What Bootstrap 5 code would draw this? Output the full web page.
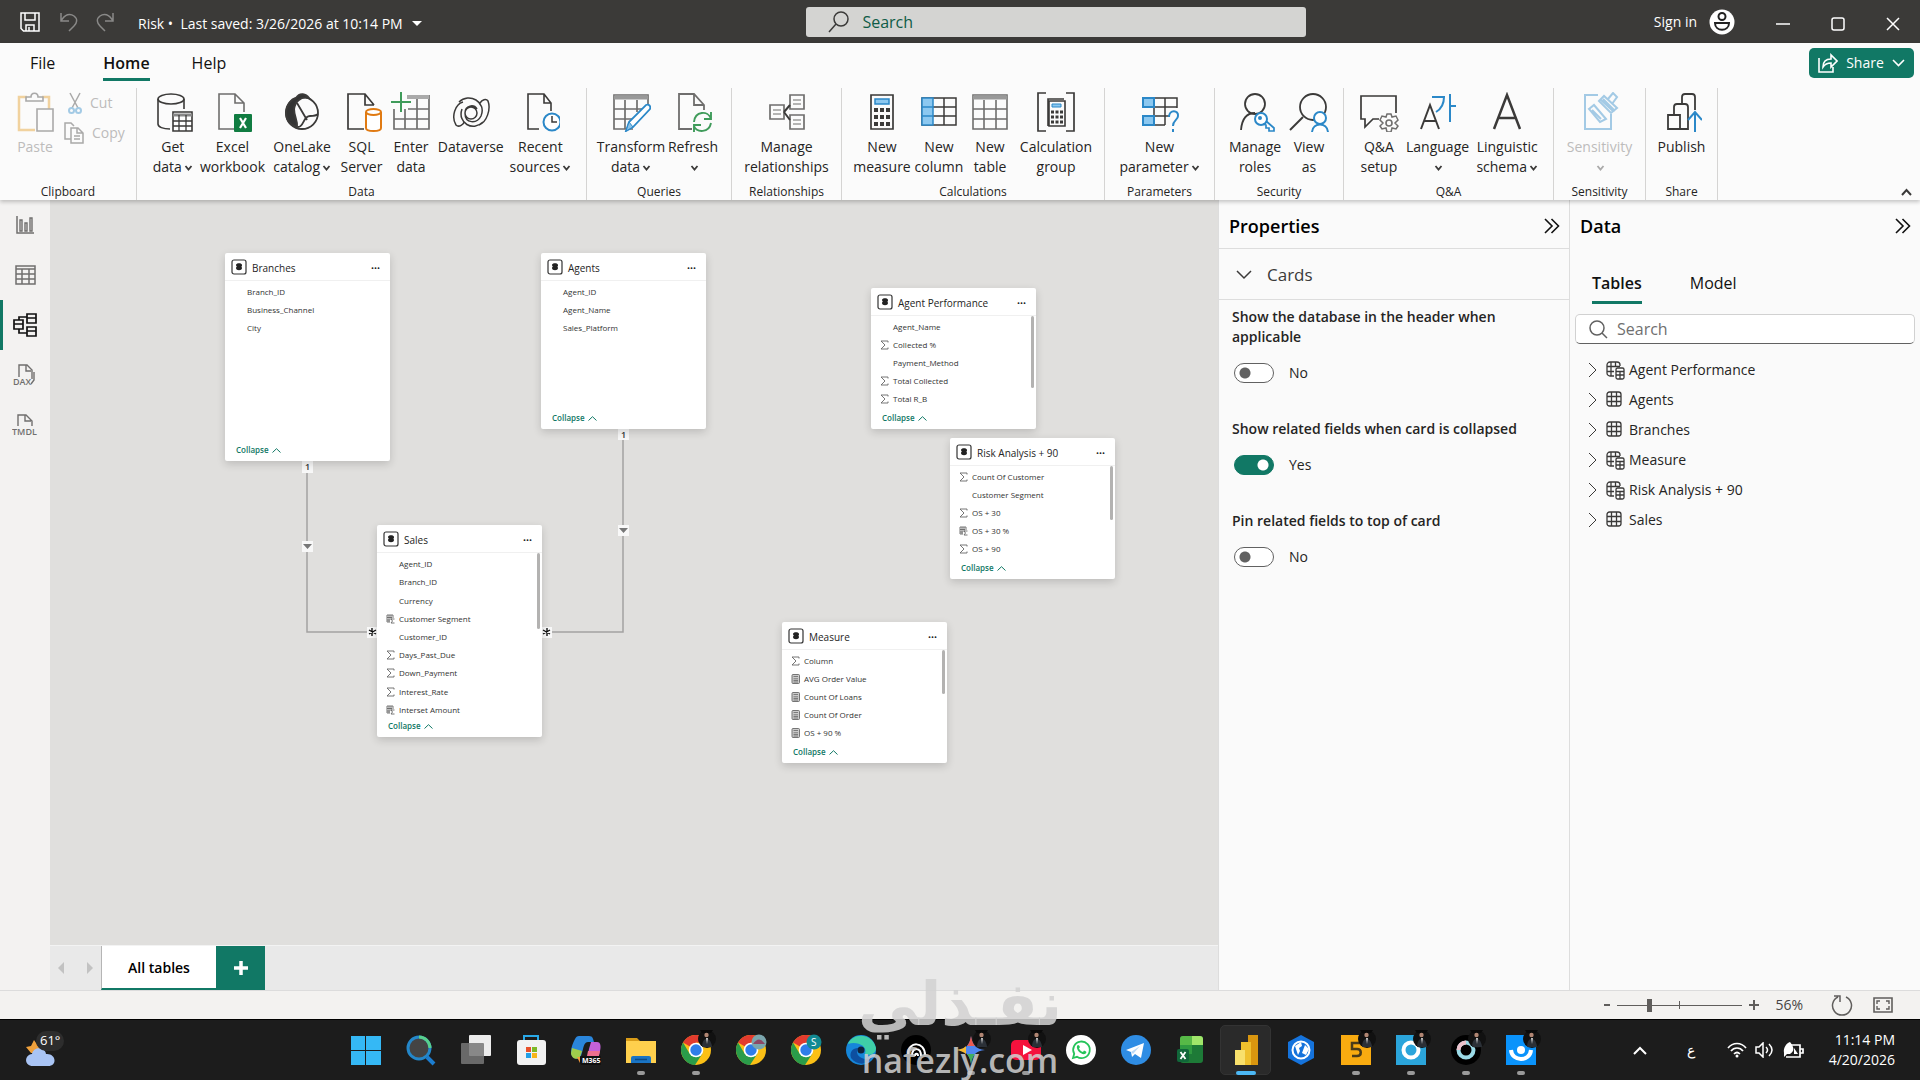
<!DOCTYPE html>
<html lang="en">
<head>
<meta charset="utf-8">
<meta name="viewport" content="width=device-width, initial-scale=1">
<title>Risk - Model view</title>
<link href="https://cdn.jsdelivr.net/npm/bootstrap@5.3.0/dist/css/bootstrap.min.css" rel="stylesheet">
<style>
  :root { --accent:#117865; --ink:#252423; --line:#dddddd; }
  body { font-family:"Open Sans","Noto Sans",sans-serif; font-size:14px; line-height:20px; color:var(--ink); background:#1c1c1c; overflow:hidden; }
  button { border:0; background:none; padding:0; color:inherit; font:inherit; }
  svg { display:block; fill:none; stroke:#3b3a39; stroke-width:2; flex:none; }
  svg text { stroke:none; font-family:"Open Sans",sans-serif; }
  a { color:inherit; text-decoration:none; }

  .titlebar { height:43px; background:#3b3a38; color:#fff; }
  .titlebar svg { stroke:#fff; stroke-width:1.5; }
  .title-left { flex:0 0 42%; padding-left:20px; }
  .title-search { flex:0 0 26%; height:30px; background:#d4d4d2; border-radius:3px; padding-left:22px; gap:13px; }
  .title-search svg { stroke:#3b3a39; }
  .title-search input, .data-search input { border:0; outline:0; background:none; font-size:16px; flex:1; min-width:0; padding:0; }
  .title-search input::placeholder { color:#0f5c47; opacity:1; }
  .win-btn { width:55px; height:43px; }
  .history { gap:18px; margin:0 24px 0 20px; }
  .dim { opacity:.4; }

  .ribbon { background:#fbfbfb; height:157px; position:relative; z-index:3; box-shadow:0 2px 4px rgba(0,0,0,.22); }
  .tabrow { height:45px; padding:5px 6px 0 30px; font-size:16px; color:#111; }
  .rtab { line-height:30px; height:33px; }
  .rtab.active { font-weight:600; border-bottom:3px solid var(--accent); margin:0 42px 0 48px; }
  .share-btn { width:105px; height:30px; background:var(--accent); color:#fff; border-radius:5px; font-size:14px; }
  .share-btn svg { stroke:#fff; }
  .rgroup { height:112px; border-right:1px solid #d5d4d3; padding:4px 8px 0; }
  .rgroup-name { font-size:12px; line-height:16px; text-align:center; margin-top:auto; }
  .rbtn { display:flex; flex-direction:column; align-items:center; white-space:nowrap; height:88px; }
  .rbtn > span { margin-top:5px; }
  .rbtn svg.chev { display:inline-block; width:9px; height:6px; margin-left:2px; vertical-align:1px; }
  .w44{width:44px}.w48{width:48px}.w54{width:54px}.w56{width:56px}.w60{width:60px}.w64{width:64px}.w68{width:68px}.w76{width:76px}
  .rb { stroke:#2b88c8; } .g { stroke:#6f6e6d; } .gr { stroke:#3f9b5a; } .or{stroke:#e07a12;}
  .small-cmds { margin-left:2px; gap:8px; }
  .small-cmd { gap:8px; color:#bdbcbb; height:22px; }
  .off { color:#bdbcbb; } .faded { opacity:.42; }

  .rail { width:50px; background:#f3f2f1; flex:none; }
  .rail button { height:50px; width:50px; display:flex; align-items:center; justify-content:center; border-left:3px solid transparent; padding-right:3px; }
  .rail button.active { border-left-color:var(--accent); }
  .rail svg { stroke:#706f6e; }
  .rail .active svg { stroke:#111; }

  .canvas { background:#e0dfdd; position:relative; overflow:hidden; }
  .links { position:absolute; left:0; top:0; width:100%; height:100%; }
  .entity { position:absolute; width:165px; background:#fff; border-radius:2px; box-shadow:0 3px 8px rgba(0,0,0,.16); display:flex; flex-direction:column; font-size:8px; line-height:12px; }
  .entity-head { height:28px; padding:0 10px 0 6px; gap:5px; font-size:10px; border-bottom:1px solid #f0f0f0; flex:none; }
  .entity-head span { padding-top:2px; }
  .entity-head button { font-size:8px; padding-top:2px; }
  .entity ul { list-style:none; margin:0; padding:2px 0 0 9px; flex:1; display:flex; flex-direction:column; }
  .entity li { flex:1; max-height:18px; display:flex; align-items:center; gap:4px; color:#333; }
  #sales li { max-height:none; }
  .entity li > i { width:9px; flex:none; }
  .entity li svg { width:9px; height:10px; stroke:#666; }
  .entity-foot { height:18px; padding:1px 0 0 11px; color:var(--accent); flex:none; display:flex; gap:3px; font-weight:600; }
  .entity-foot svg { width:9px; height:5px; stroke:var(--accent); margin-top:4px; }
  .entity .thumb { position:absolute; right:2px; top:28px; width:3px; background:#b3b2b1; border-radius:2px; }
  #branches{left:175px;top:53px;height:208px}
  #agents{left:491px;top:53px;height:176px}
  #sales{left:327px;top:325px;height:212px}
  #agent-performance{left:821px;top:88px;height:141px}
  #risk-analysis{left:900px;top:238px;height:141px}
  #measure{left:732px;top:422px;height:141px}
  .th76{height:76px}.th72{height:72px}.th54{height:54px}.th44{height:44px}

  .sheetbar { height:45px; background:#e9e9e9; border-top:1px solid #f3f3f3; }
  .sheet-nav { width:51px; padding:0 8px; }
  .sheet-tab { width:115px; background:#fff; border-left:1px solid #b5b5b5; border-bottom:2px solid var(--accent); font-weight:600; color:#000; padding-top:2px; }
  .sheet-add { width:49px; background:var(--accent); }

  .pane { flex:0 0 351px; background:#fafafa; border-left:1px solid var(--line); }
  .pane-head { height:48px; padding:4px 9px 0 10px; font-size:18px; font-weight:600; color:#000; }
  .prop-section { height:52px; border-top:1px solid var(--line); border-bottom:1px solid var(--line); padding:2px 0 0 17px; gap:15px; font-size:17px; color:#3b3a39; width:100%; }
  .prop-list { padding-top:7px; }
  .prop-title { font-weight:600; padding-bottom:16px; padding-right:40px; display:block; }
  .prop { padding:0 12px 36px 13px; }
  .prop .form-check { margin:0 0 0 2px; padding:0; min-height:20px; gap:15px; }
  .prop .form-check-input { float:none; margin:0; width:40px; height:20px; border:1px solid #616161; background:#fff radial-gradient(circle at 10px 9px,#616161 5px,transparent 6px) no-repeat; border-radius:10px; }
  .prop .form-check-input:checked { background:var(--accent) radial-gradient(circle at 28px 9px,#fff 5px,transparent 6px) no-repeat; border-color:var(--accent); }
  .data-tabs { padding:20px 0 0 22px; gap:48px; font-size:16px; color:#111; }
  .data-tabs button { line-height:30px; height:36px; padding-bottom:3px; border-bottom:3px solid transparent; }
  .data-tabs .active { font-weight:600; border-bottom-color:var(--accent); }
  .data-search { height:30px; margin:10px 5px 11px 5px; border:1px solid #d1d1d1; border-bottom-color:#616161; border-radius:5px; background:#fff; padding-left:13px; gap:9px; }
  .data-search input::placeholder { color:#707070; opacity:1; }
  .tree button { display:flex; align-items:center; height:30px; width:100%; padding-left:18px; }
  .tree .tw { width:9px; height:16px; margin-right:8px; stroke-width:1; }
  .tree .ti { width:20px; height:20px; margin-right:4px; stroke-width:1.3; }

  .statusbar { height:29px; background:#f3f2f0; border-top:1px solid #dcdcdc; padding-right:27px; color:#484644; }
  .statusbar svg { stroke:#605e5c; }
  .zoomer { -webkit-appearance:none; appearance:none; width:125px; height:15px; margin:0 7px; background:linear-gradient(#605e5c,#605e5c) center/100% 1px no-repeat,linear-gradient(#605e5c,#605e5c) center/1px 8px no-repeat; }
  .zoomer::-webkit-slider-thumb { -webkit-appearance:none; width:5px; height:13px; background:#605e5c; border:0; border-radius:0; }

  .taskbar { height:61px; background:#1c1c1c; border-top:1px solid #000; color:#fff; }
  .weather { flex:0 0 338px; padding-left:24px; }
  .app { width:55px; height:60px; display:flex; align-items:center; justify-content:center; position:relative; }
  .app svg { width:30px; height:30px; stroke:none; overflow:visible; }
  .app.open::after { content:""; position:absolute; bottom:5px; width:8px; height:4px; border-radius:2px; background:#9a9a9a; }
  .app.current::before { content:""; position:absolute; inset:5px 2px; background:#2a2a2a; border:1px solid #333; border-radius:5px; }
  .app.current::after { width:20px; background:#4cb8f5; }
  .app.current svg { position:relative; }
  .tray { padding-right:25px; }
  .tray svg { stroke:#fff; }

  .watermark { position:absolute; right:0; left:0; bottom:0; z-index:10; text-align:center; color:rgba(210,210,210,.86); pointer-events:none; }
  .watermark .wm-ar { font:700 60px/72px "DejaVu Sans",sans-serif; white-space:nowrap; }
  .watermark .wm-en { font:600 34px/40px "Open Sans",sans-serif; }
</style>
<script src="https://cdn.jsdelivr.net/npm/bootstrap@5.3.0/dist/js/bootstrap.bundle.min.js"></script>
</head>
<body>
<svg width="0" height="0" class="position-absolute">
  <defs>
    <symbol id="i-db" viewBox="0 0 16 16"><rect x="1" y="1" width="14" height="14" rx="2" fill="#fff" stroke="#333" stroke-width="1.200"/><path d="M5 6c0-2.500 6-2.500 6 0s-.8 1-.8 1.500.8.5.8 1.500c0 3-6 3-6 0 0-1 .8-1 .8-1.500S5 7 5 6z" fill="#222" stroke="none"/></symbol>
    <symbol id="i-up" viewBox="0 0 9 5"><path d="M.5 4.500 4.500.7l4 3.800" fill="none" stroke-width="1"/></symbol>
    <symbol id="i-chev" viewBox="0 0 9 6"><path d="M1.500 1l3 3.500 3-3.500" stroke-width="1.800"/></symbol>
    <symbol id="i-sum" viewBox="0 0 9 10"><path d="M8 2.500V1H1l4 4-4 4h7V7.500" stroke-width=".9"/></symbol>
    <symbol id="i-calc" viewBox="0 0 9 10"><rect x="1" y=".5" width="7.500" height="9" rx="1" fill="#ccc" stroke-width=".9"/><path d="M2.500 2.500h4.500M2.500 4.800h4.500M2.500 6.500h4.500M2.500 8h4.500" stroke-width=".8"/></symbol>
    <symbol id="i-col" viewBox="0 0 9 10"><path d="M1 1h6v3M1 1v7h3M3 1v7M5 1v5M1 3.500h5M1 6h3" stroke-width=".9"/><path d="M8.500 5H5l1.500 2L5 9h3.500" stroke-width=".9"/></symbol>
    <symbol id="i-table" viewBox="0 0 20 20"><rect x="2" y="2" width="14" height="14" rx="2.500"/><path d="M6.500 2v14M11.500 2v14M2 6.500h14M2 11.500h14"/></symbol>
    <symbol id="i-tcalc" viewBox="0 0 20 20"><path d="M9 16H5a3 3 0 0 1-3-3V5a3 3 0 0 1 3-3h7a3 3 0 0 1 3 3v1M6 2v14M10.500 2v4M2 6.500h13M2 11.500h7"/><rect x="11" y="8" width="8" height="11" rx="1.500" fill="#fff"/><path d="M11 11.500h8M11 15h8M15 11v8" stroke-width="1.300"/></symbol>
    <symbol id="i-right" viewBox="0 0 9 16"><path d="M1 1l7 7-7 7"/></symbol>
    <symbol id="i-dbl" viewBox="0 0 16 16"><path d="M1 1l7 7-7 7M7.500 1l7 7-7 7" stroke="#111" stroke-width="1.600"/></symbol>
    <symbol id="i-chrome" viewBox="0 0 30 30"><circle cx="15" cy="15" r="15" fill="#fbc016"/><path d="M15 15 2 7.500A15 15 0 0 1 28 7.500H15z" fill="#e33b2e"/><path d="M2 7.500A15 15 0 0 0 14 30l7.500-11.500-13-0z" fill="#2a9c4a"/><circle cx="15" cy="15" r="7.300" fill="#fff"/><circle cx="15" cy="15" r="5.700" fill="#2f7de9"/></symbol>
    <symbol id="i-face" viewBox="0 0 18 20"><circle cx="9" cy="10" r="9" fill="#111"/><path d="M2 1h13l-2 3H4z" fill="#0a0a0a"/><circle cx="8.500" cy="6" r="2.200" fill="#b08572"/><path d="M4 18c0-11 9-11 10 0z" fill="#2b3037"/><path d="M8 9l1 6 1-6z" fill="#ccc"/></symbol>
  </defs>
</svg>

<div class="vh-100 d-flex flex-column position-relative">
  <header class="titlebar d-flex align-items-center">
    <div class="title-left d-flex align-items-center">
      <button aria-label="Save"><svg width="20" height="20" viewBox="0 0 20 20"><path d="M1 1h18v18H3.500L1 16.500zM5 1v7h10V1M6 19v-6h8v6M9 15v4"/></svg></button>
      <div class="history d-flex">
        <button aria-label="Undo" class="dim"><svg width="18" height="20" viewBox="0 0 18 20"><path d="M1 1v8h8M1 9c4-7 9-8 13-5s3 7 0 10l-5 5"/></svg></button>
        <button aria-label="Redo" class="dim"><svg width="18" height="20" viewBox="0 0 18 20"><path d="M17 1v8H9M17 9C13 2 8 1 4 4s-3 7 0 10l5 5"/></svg></button>
      </div>
      <button class="d-flex align-items-center gap-2 pt-1">Risk&nbsp;•&nbsp; Last saved: 3/26/2026 at 10:14 PM<svg width="12" height="7" viewBox="0 0 12 7"><path d="M1 1h10L6 6z" fill="#fff" stroke="none"/></svg></button>
    </div>
    <label class="title-search d-flex align-items-center"><svg width="21" height="22" viewBox="0 0 21 22"><circle cx="13" cy="8" r="7"/><path d="M8 13l-7 8"/></svg><input type="text" placeholder="Search" aria-label="Search"></label>
    <div class="ms-auto d-flex align-items-center">
      <button class="d-flex align-items-center gap-2 me-3 pe-1">Sign in<svg class="ms-1" width="26" height="26" viewBox="0 0 26 26"><circle cx="13" cy="13" r="12.500" fill="#fff" stroke="none"/><circle cx="13" cy="7.500" r="3.500" stroke="#222" stroke-width="2"/><path d="M6 14h14c0 9-14 9-14 0z" stroke="#222" stroke-width="2"/></svg></button>
      <button class="win-btn" aria-label="Minimize"><svg class="m-auto" width="14" height="14" viewBox="0 0 14 14"><path d="M0 9h14"/></svg></button>
      <button class="win-btn" aria-label="Maximize"><svg class="m-auto mt-1" width="14" height="14" viewBox="0 0 14 14"><rect x="1" y="1" width="12" height="12" rx="2"/></svg></button>
      <button class="win-btn" aria-label="Close"><svg class="m-auto mt-1" width="14" height="14" viewBox="0 0 14 14"><path d="M1 1l12 12M13 1L1 13"/></svg></button>
    </div>
  </header>

  <section class="ribbon">
    <nav class="tabrow d-flex align-items-start">
      <a href="#" class="rtab">File</a>
      <a href="#" class="rtab active">Home</a>
      <a href="#" class="rtab">Help</a>
      <button class="share-btn ms-auto d-flex align-items-center justify-content-center gap-2"><svg width="20" height="20" viewBox="0 0 20 20"><path d="M1 5v14h14v-5M5 14c0-6 4-8 8-8V2l6 6-6 6v-4c-4 0-6 1-8 4z" stroke-width="1.600"/></svg><span>Share</span><svg width="13" height="8" viewBox="0 0 13 8"><path d="M1 1l5.500 5.500L12 1" stroke-width="1.600"/></svg></button>
    </nav>
    <div class="d-flex position-relative">
      <div class="rgroup d-flex flex-column" style="width:137px">
        <div class="d-flex">
          <button class="rbtn w54 off" disabled><svg class="faded" width="40" height="40" viewBox="0 0 40 40"><path d="M12 5H4v33h16M27 5h7v12" stroke="#e59a1f" stroke-width="2.500"/><path d="M11 9h17V5h-5c0-5-7-5-7 0h-5z" stroke-width="1.600"/><path d="M22 17h16v22H22z" stroke-width="1.600"/></svg><span>Paste</span></button>
          <div class="small-cmds d-flex flex-column">
            <button class="small-cmd d-flex align-items-center ps-1" disabled><svg class="faded" width="14" height="22" viewBox="0 0 14 22"><path d="M2 1l8 15M12 1L4 16" stroke-width="1.500"/><circle cx="3.500" cy="18.500" r="2.500" class="rb"/><circle cx="10.500" cy="18.500" r="2.500" class="rb"/></svg>Cut</button>
            <button class="small-cmd d-flex align-items-center" disabled><svg class="faded" width="20" height="22" viewBox="0 0 20 22"><path d="M7 17H1V1h6l3 3M7 6h7l5 5v10H7zM13 6v5h6M10 14h6M10 17h6" stroke-width="1.500"/></svg>Copy</button>
          </div>
        </div>
        <div class="rgroup-name">Clipboard</div>
      </div>

      <div class="rgroup d-flex flex-column" style="width:450px">
        <div class="d-flex">
          <button class="rbtn w56"><svg width="40" height="40" viewBox="0 0 40 40"><ellipse cx="18" cy="7" rx="13" ry="5" stroke-width="1.600"/><path d="M5 7v25c0 3 5 5 12 5M31 7v10" stroke-width="1.600"/><path d="M20 20h19v19H20z" fill="#fff" stroke-width="1.600"/><path d="M20 23h19" stroke="#888" stroke-width="3"/><path d="M20 29h19M20 34h19M26 23v16M33 23v16" stroke-width="1.300"/></svg><span>Get<br>data<svg class="chev"><use href="#i-chev"/></svg></span></button>
          <button class="rbtn w64"><svg width="40" height="40" viewBox="0 0 40 40"><path d="M22 37H7V2h16l9 9v9M23 2v9h9" stroke-width="1.600" class="g"/><rect x="22" y="22" width="18" height="18" rx="1" fill="#107c41" stroke="none"/><path d="M28 26l6 10M34 26l-6 10" stroke="#fff" stroke-width="2.200"/></svg><span>Excel<br>workbook</span></button>
          <button class="rbtn w76"><svg width="40" height="40" viewBox="0 0 40 40"><circle cx="20" cy="21" r="16" stroke-width="1.800"/><path d="M14 6c4-6 10-4 13 0-9-2-14 4-15 11 0 8 4 12 3 18C7 33 4 27 4 20c0-6 5-13 10-14z" fill="#333"/><path d="M15 11l10 17M16 35c6 0 5-11 12-11 4 0 6 0 8-2" stroke-width="1.800"/></svg><span>OneLake<br>catalog<svg class="chev"><use href="#i-chev"/></svg></span></button>
          <button class="rbtn w44"><svg width="40" height="40" viewBox="0 0 40 40"><path d="M22 37H6V2h17l9 11M23 2v11h9" stroke-width="1.700"/><path d="M24 20v16c0 4 15 4 15 0V20" fill="#fff" class="or"/><ellipse cx="31.500" cy="20" rx="7.500" ry="3" fill="#fff" class="or"/></svg><span>SQL<br>Server</span></button>
          <button class="rbtn w56"><svg width="40" height="40" viewBox="0 0 40 40"><path d="M16 5h22M38 3v34H3V17M3 27h35M17 17h21M14 17v20M26 7v30" class="g" stroke-width="1.700"/><path d="M16 5h22" stroke="#aaa" stroke-width="4"/><path d="M10 0v20M0 10h20" class="gr"/></svg><span>Enter<br>data</span></button>
          <button class="rbtn w64"><svg width="40" height="40" viewBox="0 0 40 40"><path d="M8 10C18 0 36 10 30 24c-4 8-16 8-16-3 0-8 9-9 12-4M12 10C4 12 0 25 5 33c3 3 8-1 8-3M32 30c-10 10-26 1-21-13M29 11c2-3 6-5 8-2 3 8-1 21-9 24M20 15a6 6 0 1 1 0 12 6 6 0 0 1 0-12" stroke-width="1.500"/></svg><span>Dataverse</span></button>
          <button class="rbtn w76"><svg width="40" height="40" viewBox="0 0 40 40"><path d="M19 37H8V2h16l7 9v8M24 2v9h7" stroke-width="1.600"/><circle cx="32" cy="30" r="8.500" class="rb" fill="#fff"/><path d="M32 24v6h5" stroke-width="1.500"/></svg><span>Recent<br>sources<svg class="chev"><use href="#i-chev"/></svg></span></button>
        </div>
        <div class="rgroup-name">Data</div>
      </div>

      <div class="rgroup d-flex flex-column" style="width:145px">
        <div class="d-flex justify-content-center">
          <button class="rbtn w68"><svg width="40" height="40" viewBox="0 0 40 40"><path d="M22 37H3V3h34v9M3 17h28M3 27h20M14 8v29M26 8v12" class="g" stroke-width="1.700"/><path d="M3 5.500h34" stroke="#999" stroke-width="4"/><path d="M15 39l3-9 17-17c3-1 5 1 4 4L22 35z" fill="#fff" class="rb" stroke-width="1.800"/><path d="M15 39l3-9 4 5z" fill="#8cc3e8" class="rb" stroke-width="1"/></svg><span>Transform<br>data<svg class="chev"><use href="#i-chev"/></svg></span></button>
          <button class="rbtn w56"><svg width="40" height="40" viewBox="0 0 40 40"><path d="M19 37H6V2h15l10 11v5M21 2v11h10" class="g" stroke-width="1.800"/><path d="M21 30c1-11 14-12 17-3M38 20v7h-7M38 31c-2 10-14 10-17 3M21 40v-7h7" class="gr" stroke-width="1.900"/></svg><span>Refresh<br><svg class="chev"><use href="#i-chev"/></svg></span></button>
        </div>
        <div class="rgroup-name">Queries</div>
      </div>

      <div class="rgroup d-flex flex-column align-items-stretch" style="width:110px">
        <button class="rbtn"><svg width="40" height="40" viewBox="0 0 40 40"><path d="M3 13h14v14H3zM23 3h14v14H23zM23 23h14v14H23z" stroke-width="1.700" class="g"/><path d="M17 20l6-7M17 20l6 8" stroke-width="2"/><path d="M6 18h8M6 22h8M26 8h8M26 12h8M26 28h8M26 32h8" stroke-width="1.200" class="g"/></svg><span>Manage<br>relationships</span></button>
        <div class="rgroup-name">Relationships</div>
      </div>

      <div class="rgroup d-flex flex-column" style="width:263px">
        <div class="d-flex justify-content-center">
          <button class="rbtn w60"><svg width="40" height="40" viewBox="0 0 40 40"><path d="M9 3h22v34H9z" stroke-width="1.700"/><path d="M13 7h14v5H13z" fill="#8cc8f0" class="rb" stroke-width="1.500"/><path d="M12 18h4m2 0h4m2 0h4M12 25h4m2 0h4m2 0h4M12 32h4m2 0h4m2 0h4" stroke-width="4"/></svg><span>New<br>measure</span></button>
          <button class="rbtn w54"><svg width="40" height="40" viewBox="0 0 40 40"><path d="M3 6h34v27H3zM3 15h34M3 24h34M25 6v27" stroke-width="1.500"/><path d="M3 6h11v27H3zM3 15h11M3 24h11" fill="#8cc8f0" class="rb" stroke-width="1.500"/></svg><span>New<br>column</span></button>
          <button class="rbtn w48"><svg width="40" height="40" viewBox="0 0 40 40"><path d="M3 3h34v34H3zM3 17h34M3 27h34M14 8v29M26 8v29" class="g" stroke-width="1.600"/><path d="M3 5.500h34" stroke="#999" stroke-width="4"/></svg><span>New<br>table</span></button>
          <button class="rbtn w76 ms-1"><svg width="40" height="40" viewBox="0 0 40 40"><path d="M10 1H2v38h8M30 1h8v38h-8" stroke-width="1.700"/><path d="M12 34V7h16M13 9h16v25H13z" stroke-width="1.600"/><path d="M16 12h9v3h-9z" fill="#8cc8f0" class="rb" stroke-width="1"/><path d="M15 20h3m1.500 0h3m1.500 0h3M15 25h3m1.500 0h3m1.500 0h3M15 30h3m1.500 0h3m1.500 0h3" stroke-width="3"/></svg><span>Calculation<br>group</span></button>
        </div>
        <div class="rgroup-name">Calculations</div>
      </div>

      <div class="rgroup d-flex flex-column" style="width:110px">
        <button class="rbtn"><svg width="40" height="40" viewBox="0 0 40 40"><path d="M3 6h34v10M3 33h22M3 15h34M3 24h26M25 6v27M14 6v27" stroke-width="1.500"/><path d="M3 6h11v9H3zM3 24h11v9H3z" fill="#8cc8f0" class="rb"/><path d="M29 25c0-8 10-7 9-1 0 4-5 4-5 10M33 37v3" class="rb" stroke-width="2"/></svg><span>New<br>parameter<svg class="chev"><use href="#i-chev"/></svg></span></button>
        <div class="rgroup-name">Parameters</div>
      </div>

      <div class="rgroup d-flex flex-column" style="width:129px">
        <div class="d-flex justify-content-center">
          <button class="rbtn w60"><svg width="40" height="40" viewBox="0 0 40 40"><circle cx="20" cy="12" r="10" stroke-width="1.800"/><path d="M6 38c1-12 6-17 14-17" stroke-width="1.800"/><circle cx="26" cy="27" r="6" class="rb" fill="#fff"/><circle cx="25" cy="26" r="1" class="rb"/><path d="M31 29l8 7v3h-5v-3h-3v-3l-3-1" class="rb" stroke-width="1.700"/></svg><span>Manage<br>roles</span></button>
          <button class="rbtn w48"><svg width="40" height="40" viewBox="0 0 40 40"><circle cx="24" cy="15" r="13" stroke-width="1.800"/><path d="M14 25L1 38" stroke-width="2"/><circle cx="31" cy="26" r="6" fill="#fff" class="rb"/><path d="M23 40c1-10 15-10 16 0" class="rb" fill="#fff"/></svg><span>View<br>as</span></button>
        </div>
        <div class="rgroup-name">Security</div>
      </div>

      <div class="rgroup d-flex flex-column" style="width:210px">
        <div class="d-flex justify-content-center">
          <button class="rbtn w54"><svg width="40" height="40" viewBox="0 0 40 40"><path d="M20 27h-6l-8 8v-8H2V4h35v17" stroke-width="1.700"/><circle cx="30" cy="31" r="3" class="g" stroke-width="1.600"/><path d="M28 22h4l1 3 4-1 2 4-3 3 3 3-2 3-4-1-1 4h-4l-1-4-4 1-2-3 3-3-3-3 2-4 4 1z" class="g" stroke-width="1.500"/></svg><span>Q&amp;A<br>setup</span></button>
          <button class="rbtn w64"><svg width="40" height="40" viewBox="0 0 40 40"><path d="M3 37l9-24 9 24M6 29h12" stroke-width="2"/><path d="M14 5h12c0 8-3 12-8 15M32 2v28M32 14h6" class="rb" stroke-width="2"/></svg><span>Language<br><svg class="chev"><use href="#i-chev"/></svg></span></button>
          <button class="rbtn w76"><svg width="40" height="40" viewBox="0 0 40 40"><path d="M7 37L20 3l13 34M11 26h18" stroke-width="2.500"/></svg><span>Linguistic<br>schema<svg class="chev"><use href="#i-chev"/></svg></span></button>
        </div>
        <div class="rgroup-name">Q&amp;A</div>
      </div>

      <div class="rgroup d-flex flex-column" style="width:92px">
        <button class="rbtn off" disabled><svg class="faded" width="40" height="40" viewBox="0 0 40 40"><path d="M18 3H5v34h26V22M9 17l5-4 12 14-6 3zM12 18l9 9" class="rb" stroke-width="2"/><path d="M19 9l5-5 13 12-6 5zM23 7l12 12M28 7l5-6 4 4-5 7M21 8l12 11" class="rb" stroke-width="2"/></svg><span>Sensitivity<br><svg class="chev faded"><use href="#i-chev"/></svg></span></button>
        <div class="rgroup-name">Sensitivity</div>
      </div>

      <div class="rgroup d-flex flex-column" style="width:72px">
        <button class="rbtn"><svg width="40" height="40" viewBox="0 0 40 40"><path d="M6 23h12v14H6zM12 23v-8c0-2 1-3 3-3h8c2 0 3 1 3 3v22H18M20 11V5c0-2 1-3 3-3h7c2 0 3 1 3 3v13" stroke-width="1.800"/><path d="M33 40V21M26 28l7-8 7 8" class="rb" stroke-width="2"/></svg><span>Publish</span></button>
        <div class="rgroup-name">Share</div>
      </div>
      <button class="ms-auto align-self-end me-2 mb-1" aria-label="Collapse the ribbon"><svg width="11" height="8" viewBox="0 0 11 8"><path d="M1 7l4.500-5L10 7"/></svg></button>
    </div>
  </section>

  <main class="d-flex flex-fill overflow-hidden">
    <nav class="rail">
      <button aria-label="Report view"><svg width="18" height="18" viewBox="0 0 18 18"><path d="M1 0v17h17" stroke-width="1.500"/><path d="M4 4h2v11H4zM9 7h2v8H9zM14 2h2v13h-2z" stroke-width="1.400"/></svg></button>
      <button aria-label="Table view"><svg width="21" height="20" viewBox="0 0 21 20"><path d="M1 1h19v18H1zM1 4h19M1 9h19M1 14h19M7 4v15M14 4v15" stroke-width="1.500"/></svg></button>
      <button class="active" aria-label="Model view"><svg width="24" height="24" viewBox="0 0 24 24"><path d="M1 7h9v9H1zM1 11h9M14 1h9v9h-9zM14 5h9M14 14h9v9h-9zM14 18h9M6 7V4h8M6 16v4h8" stroke-width="1.700"/></svg></button>
      <button aria-label="DAX query view"><svg width="24" height="24" viewBox="0 0 24 24"><path d="M6 14V2h8l5 5v9M13 2v6h5M21 9v8l-3 4" stroke-width="1.400"/><text x="0" y="22" font-size="9" font-weight="600" fill="#706f6e">DAX</text></svg></button>
      <button aria-label="TMDL view"><svg width="26" height="24" viewBox="0 0 26 24"><path d="M6 13V2h8l6 6v5M13 2v6h6" stroke-width="1.400"/><text x="0" y="22" font-size="9" font-weight="600" fill="#706f6e">TMDL</text></svg></button>
    </nav>

    <div class="flex-fill d-flex flex-column overflow-hidden">
      <div class="canvas flex-fill">
        <svg class="links"><g stroke="#a3a2a1" stroke-width="1.500"><path d="M257 262V432H322M573 229V432H497"/></g>
          <g fill="#f8f8f8" stroke="none"><rect x="252" y="261" width="11" height="12"/><rect x="252" y="341" width="11" height="11"/><rect x="317" y="427" width="11" height="11"/><rect x="568" y="229" width="11" height="11"/><rect x="568" y="325" width="11" height="11"/><rect x="491" y="427" width="11" height="11"/></g>
          <g fill="#777" stroke="none"><path d="M253 344h9l-4.500 5zM569 328h9l-4.500 5z"/></g>
          <g font-size="9" font-weight="600" fill="#333"><text x="255" y="270">1</text><text x="571" y="238">1</text></g>
          <path d="M322 428v8M319 430l7 4M326 430l-7 4M497 428v8M493 430l7 4M500 430l-7 4" stroke="#111" stroke-width="1.400"/>
        </svg>

        <article class="entity" id="branches">
          <div class="entity-head d-flex align-items-center"><svg width="16" height="16"><use href="#i-db"/></svg><span>Branches</span><button class="ms-auto" aria-label="More options">•••</button></div>
          <ul><li><i></i>Branch_ID</li><li><i></i>Business_Channel</li><li><i></i>City</li></ul>
          <button class="entity-foot">Collapse<svg><use href="#i-up"/></svg></button>
        </article>
        <article class="entity" id="agents">
          <div class="entity-head d-flex align-items-center"><svg width="16" height="16"><use href="#i-db"/></svg><span>Agents</span><button class="ms-auto" aria-label="More options">•••</button></div>
          <ul><li><i></i>Agent_ID</li><li><i></i>Agent_Name</li><li><i></i>Sales_Platform</li></ul>
          <button class="entity-foot">Collapse<svg><use href="#i-up"/></svg></button>
        </article>
        <article class="entity" id="sales">
          <div class="entity-head d-flex align-items-center"><svg width="16" height="16"><use href="#i-db"/></svg><span>Sales</span><button class="ms-auto" aria-label="More options">•••</button></div>
          <ul><li><i></i>Agent_ID</li><li><i></i>Branch_ID</li><li><i></i>Currency</li><li><svg><use href="#i-col"/></svg>Customer Segment</li><li><i></i>Customer_ID</li><li><svg><use href="#i-sum"/></svg>Days_Past_Due</li><li><svg><use href="#i-sum"/></svg>Down_Payment</li><li><svg><use href="#i-sum"/></svg>Interest_Rate</li><li><svg><use href="#i-col"/></svg>Interset Amount</li></ul>
          <button class="entity-foot">Collapse<svg><use href="#i-up"/></svg></button><span class="thumb th76"></span>
        </article>
        <article class="entity" id="agent-performance">
          <div class="entity-head d-flex align-items-center"><svg width="16" height="16"><use href="#i-db"/></svg><span>Agent Performance</span><button class="ms-auto" aria-label="More options">•••</button></div>
          <ul><li><i></i>Agent_Name</li><li><svg><use href="#i-sum"/></svg>Collected %</li><li><i></i>Payment_Method</li><li><svg><use href="#i-sum"/></svg>Total Collected</li><li><svg><use href="#i-sum"/></svg>Total R_B</li></ul>
          <button class="entity-foot">Collapse<svg><use href="#i-up"/></svg></button><span class="thumb th72"></span>
        </article>
        <article class="entity" id="risk-analysis">
          <div class="entity-head d-flex align-items-center"><svg width="16" height="16"><use href="#i-db"/></svg><span>Risk Analysis + 90</span><button class="ms-auto" aria-label="More options">•••</button></div>
          <ul><li><svg><use href="#i-sum"/></svg>Count Of Customer</li><li><i></i>Customer Segment</li><li><svg><use href="#i-sum"/></svg>OS + 30</li><li><svg><use href="#i-col"/></svg>OS + 30 %</li><li><svg><use href="#i-sum"/></svg>OS + 90</li></ul>
          <button class="entity-foot">Collapse<svg><use href="#i-up"/></svg></button><span class="thumb th54"></span>
        </article>
        <article class="entity" id="measure">
          <div class="entity-head d-flex align-items-center"><svg width="16" height="16"><use href="#i-db"/></svg><span>Measure</span><button class="ms-auto" aria-label="More options">•••</button></div>
          <ul><li><svg><use href="#i-sum"/></svg>Column</li><li><svg><use href="#i-calc"/></svg>AVG Order Value</li><li><svg><use href="#i-calc"/></svg>Count Of Loans</li><li><svg><use href="#i-calc"/></svg>Count Of Order</li><li><svg><use href="#i-calc"/></svg>OS + 90 %</li></ul>
          <button class="entity-foot">Collapse<svg><use href="#i-up"/></svg></button><span class="thumb th44"></span>
        </article>
      </div>
      <div class="sheetbar d-flex">
        <div class="sheet-nav d-flex align-items-center justify-content-between"><button aria-label="Previous"><svg width="6" height="12" viewBox="0 0 6 12"><path d="M6 0v12L0 6z" fill="#c2c2c2" stroke="none"/></svg></button><button aria-label="Next"><svg width="6" height="12" viewBox="0 0 6 12"><path d="M0 0v12l6-6z" fill="#c2c2c2" stroke="none"/></svg></button></div>
        <button class="sheet-tab">All tables</button>
        <button class="sheet-add" aria-label="New layout"><svg class="m-auto" width="14" height="14" viewBox="0 0 14 14"><path d="M7 0v14M0 7h14" stroke="#fff" stroke-width="3.500"/></svg></button>
      </div>
    </div>

    <aside class="pane">
      <div class="pane-head d-flex align-items-center justify-content-between">Properties<button aria-label="Collapse pane"><svg width="16" height="16"><use href="#i-dbl"/></svg></button></div>
      <button class="prop-section d-flex align-items-center"><svg width="16" height="10" viewBox="0 0 16 10"><path d="M1 1l7 7 7-7" stroke-width="1.500"/></svg>Cards</button>
      <div class="prop-list">
        <div class="prop"><label class="prop-title" for="p1">Show the database in the header when applicable</label><div class="form-check d-flex align-items-center"><input class="form-check-input" type="checkbox" role="switch" id="p1"><span>No</span></div></div>
        <div class="prop"><label class="prop-title" for="p2">Show related fields when card is collapsed</label><div class="form-check d-flex align-items-center"><input class="form-check-input" type="checkbox" role="switch" id="p2" checked><span>Yes</span></div></div>
        <div class="prop"><label class="prop-title" for="p3">Pin related fields to top of card</label><div class="form-check d-flex align-items-center"><input class="form-check-input" type="checkbox" role="switch" id="p3"><span>No</span></div></div>
      </div>
    </aside>

    <aside class="pane">
      <div class="pane-head d-flex align-items-center justify-content-between">Data<button aria-label="Collapse pane"><svg width="16" height="16"><use href="#i-dbl"/></svg></button></div>
      <div class="data-tabs d-flex"><button class="active">Tables</button><button>Model</button></div>
      <label class="data-search d-flex align-items-center"><svg width="19" height="19" viewBox="0 0 19 19"><circle cx="8" cy="8" r="7" stroke="#616161" stroke-width="1.500"/><path d="M13 13l5 5" stroke="#616161" stroke-width="1.500"/></svg><input type="text" placeholder="Search" aria-label="Search tables"></label>
      <div class="tree">
        <button><svg class="tw"><use href="#i-right"/></svg><svg class="ti"><use href="#i-tcalc"/></svg>Agent Performance</button>
        <button><svg class="tw"><use href="#i-right"/></svg><svg class="ti"><use href="#i-table"/></svg>Agents</button>
        <button><svg class="tw"><use href="#i-right"/></svg><svg class="ti"><use href="#i-table"/></svg>Branches</button>
        <button><svg class="tw"><use href="#i-right"/></svg><svg class="ti"><use href="#i-tcalc"/></svg>Measure</button>
        <button><svg class="tw"><use href="#i-right"/></svg><svg class="ti"><use href="#i-tcalc"/></svg>Risk Analysis + 90</button>
        <button><svg class="tw"><use href="#i-right"/></svg><svg class="ti"><use href="#i-table"/></svg>Sales</button>
      </div>
    </aside>
  </main>

  <footer class="statusbar d-flex align-items-center justify-content-end">
    <button aria-label="Zoom out"><svg width="6" height="10" viewBox="0 0 6 10"><path d="M0 5h6"/></svg></button>
    <input class="zoomer" type="range" min="0" max="100" value="25" aria-label="Zoom">
    <button aria-label="Zoom in"><svg width="10" height="10" viewBox="0 0 10 10"><path d="M5 0v10M0 5h10"/></svg></button>
    <span class="ms-3 me-4">56%</span>
    <button aria-label="Reset zoom" class="me-3 ms-1"><svg width="22" height="22" viewBox="0 0 22 22"><path d="M7 3a9.500 9.500 0 1 0 8 0M3 2h6v6" stroke-width="1.500"/></svg></button>
    <button aria-label="Fit to screen" class="ms-1"><svg width="20" height="16" viewBox="0 0 20 16"><path d="M1 1h18v14H1z" stroke-width="1.600"/><path d="M7 4H4v3M13 4h3v3M7 12H4V9M13 12h3V9" stroke-width="1.400"/></svg></button>
  </footer>

  <nav class="taskbar d-flex align-items-center">
    <button class="weather" aria-label="Weather"><svg width="44" height="40" viewBox="0 0 44 40"><path d="M2 17l5-1 3-6 4 6 5 1-5 6H7z" fill="#f0a13c" stroke="none"/><path d="M9 36c-9 0-9-11-1-12 2-8 13-7 14 0 10-1 12 12 2 12z" fill="#a9c4f4" stroke="none"/><rect x="12" y="1" width="28" height="20" rx="10" fill="#2d2d2d" stroke="none"/><text x="16" y="15" font-size="13" fill="#fff">61°</text></svg></button>
    <button class="app" aria-label="Start"><svg viewBox="0 0 30 30"><path d="M0 1h14v14H0zM15 1h15v14H15zM0 16h14v14H0zM15 16h15v14H15z" fill="#35b8f5"/></svg></button>
    <button class="app" aria-label="Search"><svg viewBox="0 0 30 30"><circle cx="13" cy="13" r="11" fill="#444" stroke="#2487c9" stroke-width="3"/><path d="M13 2a11 11 0 0 1 11 11" stroke="#58d08c" stroke-width="3"/><path d="M21 22l7 7" stroke="#1c7dd0" stroke-width="4"/></svg></button>
    <button class="app" aria-label="Task view"><svg viewBox="0 0 30 30"><rect x="8" y="0" width="22" height="21" rx="1" fill="#ececec"/><rect x="0" y="8" width="23" height="21" rx="1" fill="#777" opacity=".85"/></svg></button>
    <button class="app" aria-label="Microsoft Store"><svg viewBox="0 0 30 30"><path d="M8 6V1h14v5" stroke="#29a9e8" stroke-width="2"/><rect x="1" y="5" width="29" height="25" rx="3" fill="#f2f2f2"/><path d="M10 12h5v5h-5z" fill="#e8502a"/><path d="M16 12h5v5h-5z" fill="#7db928"/><path d="M10 18h5v5h-5z" fill="#22a0e6"/><path d="M16 18h5v5h-5z" fill="#f8b61c"/></svg></button>
    <button class="app" aria-label="Microsoft 365 Copilot"><svg viewBox="0 0 30 30"><path d="M8 1h10c4 0 4 3 5 6h-6c-3 0-4 3-5 7l-2 7c-3 5-10 2-10-4 0-5 2-9 4-13 1-2 2-3 4-3z" fill="#2a86dc"/><path d="M1 13l10 3-2 6c-3 4-9 1-9-4z" fill="#9fce4c"/><path d="M20 7h6c4 0 4 5 3 9-1 5-2 9-5 10H14c3-2 3-7 4-12z" fill="#c462d8"/><path d="M17 16h12c-1 5-2 9-5 10H14c2-2 2-6 3-10z" fill="#f0708f"/><path d="M6 22h8l-4 8z" fill="#f59a3c"/><rect x="9" y="21" width="21" height="9" rx="1" fill="#111"/><text x="11" y="28" font-size="7" font-weight="700" fill="#fff">M365</text></svg></button>
    <button class="app open" aria-label="File Explorer"><svg viewBox="0 0 30 30"><path d="M0 3h11l3 3h13v6H0z" fill="#d99c18"/><path d="M0 6h30v22H0z" fill="#ffd04d"/><path d="M5 28v-5q0-2 2-2h16q2 0 2 2v5z" fill="#1a74c4"/><path d="M9 24.500h12" stroke="#0b4a86" stroke-width="1.500"/></svg></button>
    <button class="app open" aria-label="Chrome"><svg viewBox="0 0 30 30"><use href="#i-chrome"/><use href="#i-face" x="17" y="-6" width="18" height="20"/></svg></button>
    <button class="app" aria-label="Chrome, second profile"><svg viewBox="0 0 30 30"><use href="#i-chrome"/><circle cx="23" cy="7" r="7.500" fill="#7ba6ad"/><path d="M17 9q6-9 12 0z" fill="#8c4766"/></svg></button>
    <button class="app" aria-label="Chrome, profile S"><svg viewBox="0 0 30 30"><use href="#i-chrome"/><circle cx="23" cy="7" r="7.500" fill="#128a93"/><text x="20" y="11" font-size="10" fill="#fff">S</text></svg></button>
    <button class="app" aria-label="Edge"><svg viewBox="0 0 30 30"><circle cx="15" cy="15" r="15" fill="#1686d9"/><path d="M2 9C6-2 26-3 30 13c0 6-6 8-11 6 3-9-9-13-17-10z" fill="#3fd0a8"/><path d="M12 13c-4 8 5 13 13 10-3 7-14 8-20 0-2-6 2-10 7-10z" fill="#0d4fa0"/><circle cx="15" cy="15" r="3.500" fill="#10233c"/></svg></button>
    <button class="app" aria-label="Podcasts"><svg viewBox="0 0 30 30"><circle cx="15" cy="15" r="15" fill="#000"/><path d="M7 19c0-13 17-13 17 1M11 20c0-8 9-8 9 1M14 21c0-3 3-3 3 0" stroke="#fff" stroke-width="2"/></svg></button>
    <button class="app open" aria-label="Gemini"><svg viewBox="0 0 30 30"><path d="M15 1c1 9 5 13 14 14-9 1-13 5-14 14C14 20 10 16 1 15 10 14 14 10 15 1z" fill="#5087ef"/><path d="M15 1c1 5 2 8 4 10H11c2-2 3-5 4-10z" fill="#ea5a50"/><path d="M1 15c5-1 7-2 9-4v8c-2-2-5-3-9-4z" fill="#f5bb34"/><path d="M11 19h8c-2 2-3 5-4 10-1-5-2-8-4-10z" fill="#3faf5f"/><use href="#i-face" x="17" y="-6" width="18" height="20"/></svg></button>
    <button class="app open" aria-label="YouTube"><svg viewBox="0 0 30 30"><rect x="0" y="5" width="30" height="20" rx="5" fill="#f5123d"/><path d="M12 10v10l9-5z" fill="#fff"/><use href="#i-face" x="17" y="-6" width="18" height="20"/></svg></button>
    <button class="app" aria-label="WhatsApp"><svg viewBox="0 0 30 30"><circle cx="15" cy="15" r="15" fill="#fff"/><path d="M7 23l1.200-4.200A8.300 8.300 0 1 1 11 21.800z" stroke="#25c45a" stroke-width="1.800"/><path d="M11 11c1-2 2-1 3 1l-1 1.500c1 2 2 3 4 3.500l1-1.500c3 1 3 2 1 3.500-4 1-9-4-8-8z" fill="#25c45a"/></svg></button>
    <button class="app" aria-label="Telegram"><svg viewBox="0 0 30 30"><circle cx="15" cy="15" r="15" fill="#2f8de4"/><path d="M5 15l18-7-3 15-6-4-3 3-1-5z" fill="#fff"/><path d="M10 17l9-6-7 8z" fill="#bcd9f5"/></svg></button>
    <button class="app" aria-label="Excel"><svg viewBox="0 0 30 30"><rect x="4" y="1" width="23" height="27" rx="3" fill="#1d7a37"/><path d="M7 1h9v9H4V4q0-3 3-3z" fill="#57b947"/><path d="M16 1h8q3 0 3 3v6H16z" fill="#a0e66a"/><path d="M4 10h12v9H4z" fill="#2f9a40"/><rect x="1" y="14" width="12" height="13" rx="2" fill="#11673a"/><path d="M4.500 17l5 7M9.500 17l-5 7" stroke="#fff" stroke-width="1.800"/></svg></button>
    <button class="app open current" aria-label="Power BI Desktop"><svg viewBox="0 0 30 30"><path d="M17 0h10v30H17z" fill="#d9960f"/><path d="M10 7h10v23H10z" fill="#efc02d"/><path d="M4 15h10v15H4z" fill="#f8e06c"/></svg></button>
    <button class="app" aria-label="VPN"><svg viewBox="0 0 30 30"><path d="M15 0l13 7v16l-13 7-13-7V7z" fill="#1573dc"/><circle cx="15" cy="15" r="8.500" stroke="#fff" stroke-width="2"/><path d="M9 11l6-4 1 4-3 2 1 3-2 4zM19 10l4 4-3 6-4-2z" fill="#fff"/></svg></button>
    <button class="app open" aria-label="Five"><svg viewBox="0 0 30 30"><path d="M0 0h30v30H0z" fill="#f9ab10"/><path d="M20 8h-9v6h5c5 0 5 7 0 7h-5" stroke="#4a3b1a" stroke-width="2.500"/><use href="#i-face" x="17" y="-6" width="18" height="20"/></svg></button>
    <button class="app open" aria-label="Mostaql"><svg viewBox="0 0 30 30"><path d="M0 0h30v30H0z" fill="#2ba5db"/><circle cx="15" cy="15" r="7.500" stroke="#fff" stroke-width="4"/><use href="#i-face" x="17" y="-6" width="18" height="20"/></svg></button>
    <button class="app open" aria-label="Ring"><svg viewBox="0 0 30 30"><circle cx="15" cy="15" r="15" fill="#000"/><circle cx="15" cy="15" r="7.500" stroke="#9bdbe8" stroke-width="4"/><path d="M7.500 15a7.500 7.500 0 0 1 7.500-7.500" stroke="#eac1cb" stroke-width="4"/><use href="#i-face" x="17" y="-6" width="18" height="20"/></svg></button>
    <button class="app open" aria-label="Nafezly"><svg viewBox="0 0 30 30"><path d="M0 0h30v30H0z" fill="#0a93fb"/><path d="M5 15c1 12 19 12 20 0" stroke="#fff" stroke-width="4"/><circle cx="15" cy="15" r="4" fill="#fff"/><use href="#i-face" x="17" y="-6" width="18" height="20"/></svg></button>
    <div class="tray ms-auto d-flex align-items-center">
      <button aria-label="Hidden icons" class="me-4"><svg width="14" height="9" viewBox="0 0 14 9"><path d="M1 8l6-6 6 6"/></svg></button>
      <button class="mx-3" lang="ar">ع</button>
      <button class="d-flex align-items-center gap-2 ms-3" aria-label="Network, sound, battery">
        <svg width="20" height="16" viewBox="0 0 20 16"><path d="M1 6c5-6 13-6 18 0M4 9c3-4 9-4 12 0M7 12c2-2 4-2 6 0" stroke-width="1.700"/><circle cx="10" cy="14" r="1.500" fill="#fff" stroke="none"/></svg>
        <svg width="20" height="16" viewBox="0 0 20 16"><path d="M1 5h3l4-4v14l-4-4H1zM11 5c2 2 2 4 0 6M14 2c4 4 4 8 0 12" stroke-width="1.500"/></svg>
        <svg width="22" height="18" viewBox="0 0 22 18"><path d="M8 4h9v12H3M17 8h3v4h-3" stroke-width="1.700"/><path d="M1 12C0 6 4 2 7 1c4 5 5 9 0 12H4l-3 3zM11 13V7l4 6z" fill="#fff" stroke="none"/></svg>
      </button>
      <button class="text-end ms-4">11:14 PM<br>4/20/2026</button>
    </div>
  </nav>

  <div class="watermark"><div class="wm-ar" lang="ar" dir="rtl">نفـذلي</div><div class="wm-en">nafezly.com</div></div>
</div>
</body>
</html>
